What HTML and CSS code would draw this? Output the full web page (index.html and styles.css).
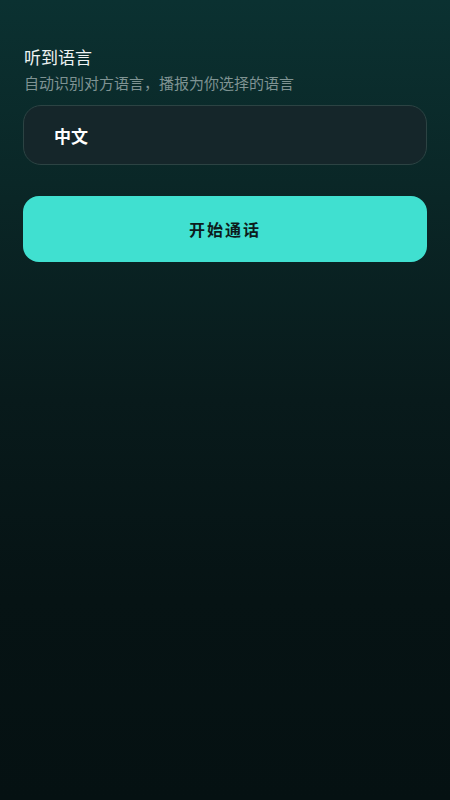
FILE: index.html
```html
<!DOCTYPE html>
<html lang="zh">
<head>
<meta charset="utf-8">
<link rel="stylesheet" href="styles.css">
</head>
<body>
<main class="page">
  <h1 class="title">听到语言</h1>
  <p class="subtitle">自动识别对方语言，播报为你选择的语言</p>
  <div class="lang-box"><span class="lang">中文</span></div>
  <button class="start">开始通话</button>
</main>
</body>
</html>
```

FILE: styles.css
```css
html, body {
  margin: 0;
  padding: 0;
  height: 100%;
}
body {
  background: linear-gradient(180deg, #0b3131 0%, #0a2626 25%, #081a1b 50%, #061314 75%, #051112 100%);
  font-family: "Noto Sans CJK SC", "Noto Sans", sans-serif;
  color: #ffffff;
}
.page {
  display: flex;
  flex-direction: column;
  padding: 45px 23px 0 23px;
}
.title {
  margin: 0;
  font-size: 17px;
  line-height: 24px;
  font-weight: 400;
  color: #eef3f3;
  padding-left: 1px;
}
.subtitle {
  margin: 4px 0 0 0;
  font-size: 15px;
  line-height: 20px;
  color: #7f9393;
  padding-left: 1px;
}
.lang-box {
  margin-top: 12px;
  height: 58px;
  border: 1px solid #2c4343;
  border-radius: 18px;
  background: #15262a;
  display: flex;
  align-items: center;
  padding-left: 30px;
}
.lang {
  font-size: 17px;
  font-weight: 700;
  color: #ffffff;
}
.start {
  margin-top: 31px;
  height: 66px;
  border: none;
  border-radius: 16px;
  background: #40e0d0;
  color: #0d1c1c;
  font-family: "Noto Sans CJK SC", "Noto Sans", sans-serif;
  font-size: 16px;
  font-weight: 700;
  letter-spacing: 2px;
  padding: 0;
}
```
